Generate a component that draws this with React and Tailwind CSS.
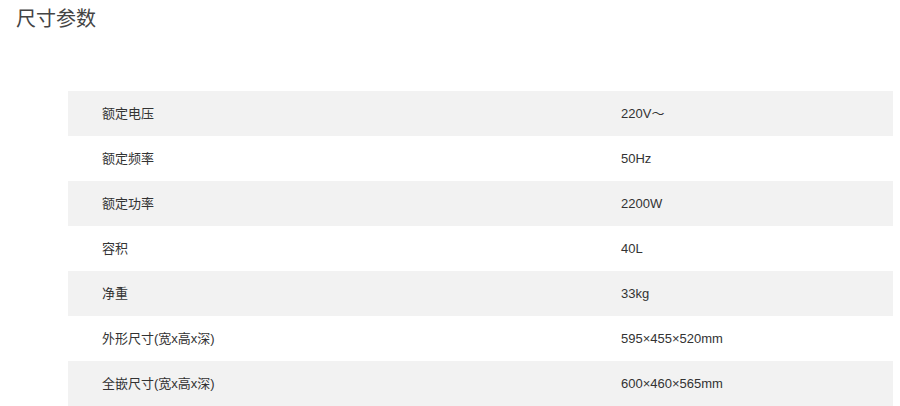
import React from 'react';

const specs = [
    ['额定电压', <>220V<span className="font-['Noto_Sans_CJK_SC',sans-serif]">〜</span></>],
    ['额定频率', '50Hz'],
    ['额定功率', '2200W'],
    ['容积', '40L'],
    ['净重', '33kg'],
    ['外形尺寸(宽x高x深)', '595×455×520mm'],
    ['全嵌尺寸(宽x高x深)', '600×460×565mm'],
];

export default function App() {
    return (
        <div className="w-[900px] h-[406px] bg-white overflow-hidden text-[#333] font-['Liberation_Sans','Noto_Sans_CJK_SC',sans-serif]">
            <h2 className="pl-4 pt-[5px] text-[20px] leading-[28px] font-normal text-[#444]">尺寸参数</h2>

            <div className="mt-[58px] ml-[68px] w-[825px]">
                {specs.map(([label, value], i) => (
                    <div
                        key={label}
                        className={"grid grid-cols-[553px_1fr] h-[45px] items-center text-[13px] " + (i % 2 === 0 ? "bg-[#f2f2f2]" : "bg-white")}
                    >
                        <div className="pl-[34px]">{label}</div>
                        <div>{value}</div>
                    </div>
                ))}
            </div>
        </div>
    );
}
